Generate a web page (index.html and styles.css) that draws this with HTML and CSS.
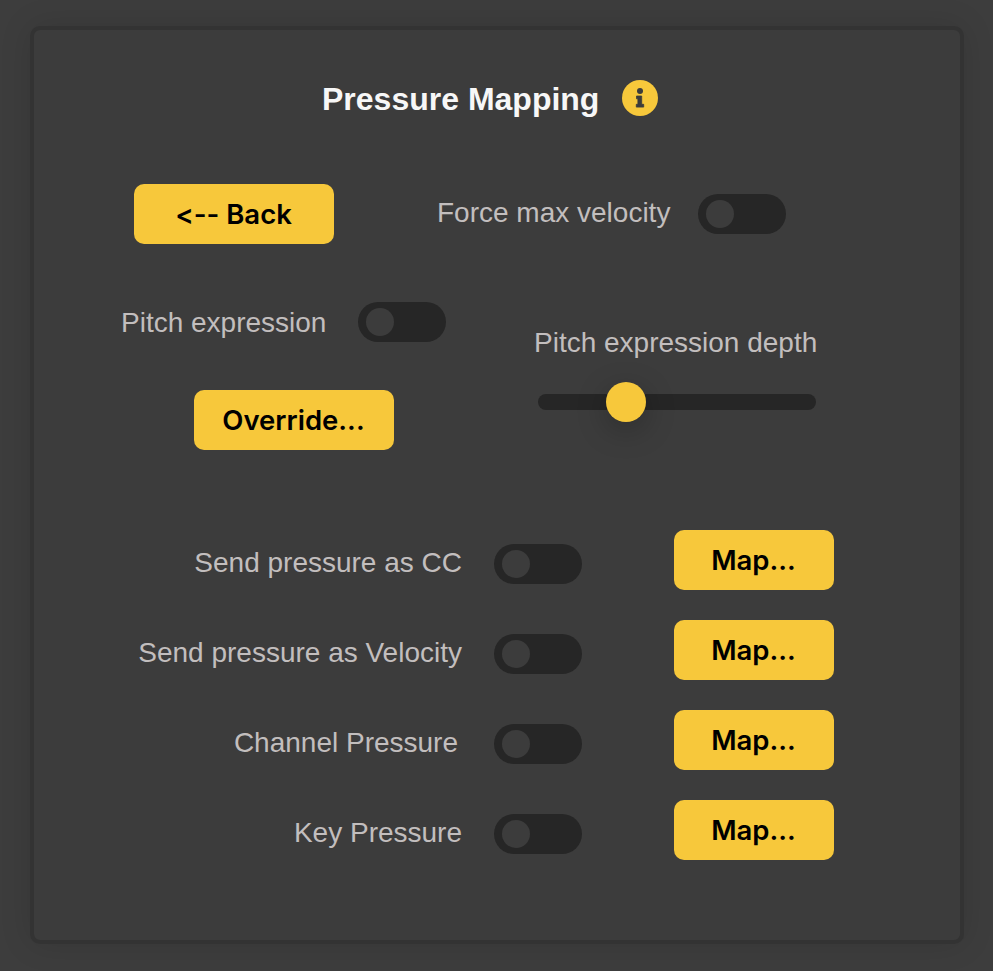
FILE: index.html
```html
<!DOCTYPE html>
<html lang="en">
<head>
<meta charset="utf-8">
<title>Pressure Mapping</title>
<link rel="stylesheet" href="styles.css">
</head>
<body>
<main class="panel">
  <header class="title">
    <h1>Pressure Mapping</h1>
    <svg class="info" viewBox="0 0 36 36"><circle cx="18" cy="18" r="18" fill="#f7c83b"/><circle cx="18" cy="11" r="3" fill="#3b3b3b"/><path d="M14.5 16h5.2v8.3h2v2.8h-7.4v-2.8h1.6v-5.5h-1.4z" fill="#3b3b3b" stroke="#3b3b3b" stroke-width=".8" stroke-linejoin="round"/></svg>
  </header>
  <section class="top">
    <button class="btn">&lt;-- Back</button>
    <span class="label force">Force max velocity</span>
    <span class="toggle"></span>
  </section>
  <section class="pitch">
    <div class="expression">
      <div class="line"><span class="label">Pitch expression</span><span class="toggle"></span></div>
      <button class="btn override">Override...</button>
    </div>
    <div class="depth">
      <span class="label">Pitch expression depth</span>
      <div class="track"><span class="knob"></span></div>
    </div>
  </section>
  <section class="mappings">
    <div class="row"><span class="label">Send pressure as CC</span><span class="toggle"></span><button class="btn map">Map...</button></div>
    <div class="row"><span class="label">Send pressure as Velocity</span><span class="toggle"></span><button class="btn map">Map...</button></div>
    <div class="row"><span class="label channel">Channel Pressure</span><span class="toggle"></span><button class="btn map">Map...</button></div>
    <div class="row"><span class="label">Key Pressure</span><span class="toggle"></span><button class="btn map">Map...</button></div>
  </section>
</main>
</body>
</html>
```
FILE: styles.css
```css
* { box-sizing: border-box; }
body {
  margin: 0;
  padding: 26px 29px 27px 30px;
  height: 971px;
  overflow: hidden;
  background: #3d3d3d;
  font-family: "Liberation Sans", Arial, sans-serif;
}
.panel {
  height: 918px;
  border: 4px solid #333;
  border-radius: 10px;
  background: #3c3c3c;
  box-shadow: 0 0 32px rgba(0, 0, 0, .12);
}
.title {
  display: flex;
  align-items: center;
  height: 36px;
  margin: 50px 0 0 288px;
}
h1 {
  width: 300px;
  margin: 2px 0 0;
  font-size: 32px;
  line-height: 36px;
  white-space: nowrap;
  color: #f7f7f7;
}
.info { width: 36px; height: 36px; }
.top {
  display: flex;
  align-items: center;
  margin: 68px 0 0 100px;
}
.label {
  font-size: 28px;
  line-height: 32px;
  white-space: nowrap;
  color: #c2bebe;
}
.force { width: 261px; margin: -2px 0 0 103px; }
.btn {
  width: 200px;
  height: 60px;
  padding: 0 1px 0 0;
  border: 0;
  border-radius: 10px;
  background: #f7c83b;
  color: #000;
  font: 600 27.5px/60px Inter, sans-serif;
  font-feature-settings: "calt" 0;
}
.toggle {
  width: 88px;
  height: 40px;
  padding: 6px 8px;
  border-radius: 20px;
  background: #262626;
}
.toggle::before {
  content: "";
  display: block;
  width: 28px;
  height: 28px;
  border-radius: 50%;
  background: #3c3c3c;
}
.pitch { display: flex; height: 206px; margin-top: 58px; }
.expression { width: 500px; padding-left: 87px; }
.line { display: flex; align-items: center; }
.line .label { width: 237px; margin-top: 2px; }
.override { display: block; margin: 48px 0 0 73px; }
.depth { padding-top: 25px; }
.depth .label { display: block; }
.track {
  width: 278px;
  height: 16px;
  margin: 35px 0 0 4px;
  padding-left: 68px;
  border-radius: 8px;
  background: #262626;
}
.knob {
  display: block;
  width: 40px;
  height: 40px;
  transform: translateY(-12px);
  border-radius: 50%;
  background: #f7c83b;
  box-shadow: 0 8px 30px rgba(0, 0, 0, .25);
}
.mappings { display: grid; gap: 30px; margin-top: 22px; }
.row {
  display: grid;
  grid-template-columns: 428px 88px 160px;
  height: 60px;
}
.row .label { margin: 17px 0 0; text-align: right; }
.row .channel { padding-right: 4px; }
.row .toggle { margin: 14px 0 0 32px; }
.row .map { width: 160px; margin-left: 124px; }
```
